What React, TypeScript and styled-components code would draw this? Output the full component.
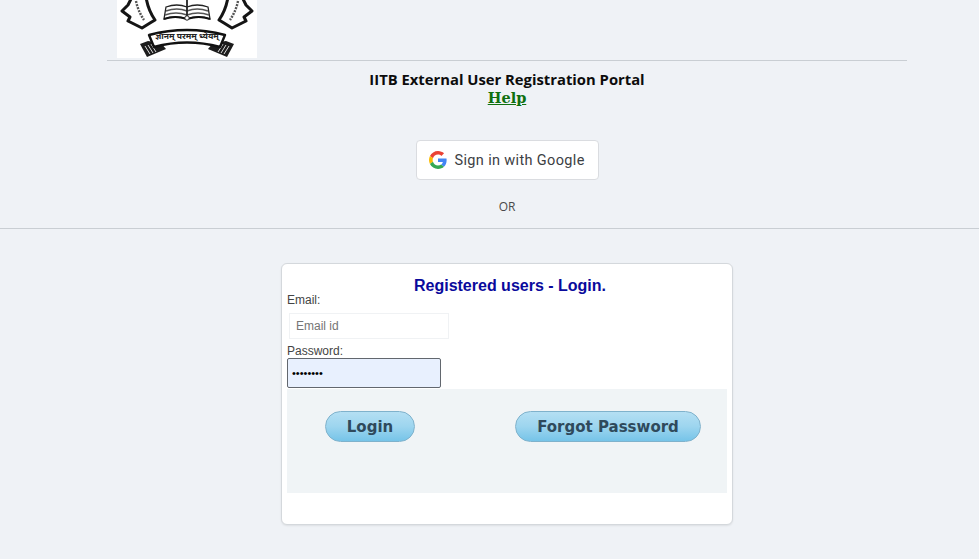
import React from 'react';
import styled, { createGlobalStyle } from 'styled-components';

const GlobalStyle = createGlobalStyle`
  html, body {
    margin: 0;
    padding: 0;
    background: #eff2f6;
    font-family: "Liberation Sans", Arial, sans-serif;
    overflow: hidden;
  }
`;

const Page = styled.div`
  width: 979px;
  height: 559px;
  display: flex;
  flex-direction: column;
`;

const Header = styled.header`
  width: 800px;
  margin-left: 107px;
  display: flex;
  flex-direction: column;
  align-items: center;
  height: 228px;
`;

const LogoRow = styled.div`
  width: 100%;
  height: 61px;
  box-sizing: border-box;
  padding-left: 10px;
  border-bottom: 1px solid #c9ced3;
`;

const LogoBox = styled.div`
  width: 140px;
  height: 58px;
  background: #fff;
`;

const Title = styled.div`
  margin: 9px 0 1px;
  font-family: "Open Sans", sans-serif;
  font-weight: 700;
  font-size: 14.8px;
  line-height: 18px;
  color: #0c0c0c;
`;

const HelpLink = styled.a`
  font-family: "DejaVu Serif", serif;
  font-weight: 700;
  font-size: 14.5px;
  line-height: 18px;
  color: #0f700f;
  text-decoration: underline;
`;

const GoogleButton = styled.button`
  margin-top: 33px;
  width: 183px;
  height: 40px;
  box-sizing: border-box;
  display: flex;
  align-items: center;
  gap: 8px;
  padding: 0 12px;
  background: #fff;
  border: 1px solid #dadce0;
  border-radius: 4px;
  font-family: Roboto, sans-serif;
  font-size: 14.5px;
  letter-spacing: 0.35px;
  color: #3c4043;
`;

const OrText = styled.div`
  margin-top: 19px;
  font-family: "Open Sans", sans-serif;
  font-size: 12px;
  line-height: 16px;
  color: #4a4a4a;
`;

const Divider = styled.hr`
  width: 100%;
  height: 1px;
  margin: 0;
  border: 0;
  background: #c9ced3;
`;

const Main = styled.main`
  display: flex;
  justify-content: center;
  padding-top: 34px;
  margin-left: 35px;
`;

const Card = styled.section`
  width: 452px;
  height: 262px;
  box-sizing: border-box;
  padding: 14px 5px 0;
  background: #fff;
  border: 1px solid #d4d8dc;
  border-radius: 6px;
  box-shadow: 0 1px 2px rgba(0, 0, 0, 0.08);
`;

const CardTitle = styled.h2`
  margin: 0 0 -1px;
  padding-left: 6px;
  text-align: center;
  font-size: 16px;
  line-height: 16px;
  font-weight: 700;
  color: #0a0a9c;
`;

const Label = styled.label`
  display: block;
  font-size: 12px;
  line-height: 14px;
  color: #444;
`;

const EmailInput = styled.input`
  display: block;
  box-sizing: border-box;
  width: 160px;
  height: 26px;
  margin: 6px 0 5px 2px;
  padding: 0 6px;
  background: #fff;
  border: 1px solid #f0f2f4;
  font-family: "Liberation Sans", sans-serif;
  font-size: 12px;
  color: #333;
  outline: none;
  &::placeholder {
    color: #757575;
    opacity: 1;
  }
`;

const PasswordInput = styled.input`
  display: block;
  box-sizing: border-box;
  width: 154px;
  height: 30px;
  margin-top: 0;
  padding: 0 4px;
  background: #e8f0fe;
  border: 1px solid #62676e;
  border-radius: 2px;
  font-family: "Liberation Sans", sans-serif;
  font-size: 11px;
  color: #000;
  outline: none;
`;

const ButtonPanel = styled.div`
  height: 104px;
  margin-top: 1px;
  box-sizing: border-box;
  padding: 22px 26px 0 38px;
  display: flex;
  align-items: flex-start;
  justify-content: space-between;
  background: #f0f4f6;
`;

const PillButton = styled.button<{ $width: number }>`
  width: ${(props) => props.$width}px;
  height: 31px;
  padding: 0;
  border: 1px solid #7fb2cc;
  border-radius: 16px;
  background: linear-gradient(to bottom, #b4dff3 0%, #9dd5ef 50%, #76c4e8 100%);
  font-family: "DejaVu Sans", Verdana, sans-serif;
  font-size: 15px;
  font-weight: 700;
  color: #2f4a5c;
`;

const GoogleMark = () => (
  <svg width="18" height="18" viewBox="0 0 48 48">
    <path fill="#EA4335" d="M24 9.5c3.54 0 6.71 1.22 9.21 3.6l6.85-6.85C35.9 2.38 30.47 0 24 0 14.62 0 6.51 5.38 2.56 13.22l7.98 6.19C12.43 13.72 17.74 9.5 24 9.5z" />
    <path fill="#4285F4" d="M46.98 24.55c0-1.57-.15-3.09-.38-4.55H24v9.02h12.94c-.58 2.96-2.26 5.48-4.78 7.18l7.73 6c4.51-4.18 7.09-10.36 7.09-17.65z" />
    <path fill="#FBBC05" d="M10.53 28.59c-.48-1.45-.76-2.99-.76-4.59s.27-3.14.76-4.59l-7.98-6.19C.92 16.46 0 20.12 0 24c0 3.88.92 7.54 2.56 10.78l7.97-6.19z" />
    <path fill="#34A853" d="M24 48c6.48 0 11.93-2.13 15.89-5.81l-7.73-6c-2.15 1.45-4.92 2.3-8.16 2.3-6.26 0-11.57-4.22-13.47-9.91l-7.98 6.19C6.51 42.62 14.62 48 24 48z" />
  </svg>
);

const GearSide = () => (
  <g>
    <path
      d="M15 -3 L11 5 L5 11 L13 17 L11 21 L25 28 L33 23 L38 20 Q31 10 29 -3 Z"
      fill="#fff"
      stroke="#151515"
      strokeWidth="3"
      strokeLinejoin="round"
    />
    <path d="M19 1 Q21 11 27 20" fill="none" stroke="#555" strokeWidth="2.4" strokeDasharray="2 1.2" />
  </g>
);

const LogoMark = () => (
  <svg width="140" height="58" viewBox="0 0 140 58">
    <GearSide />
    <g transform="translate(140 0) scale(-1 1)">
      <GearSide />
    </g>
    <path d="M47 19 Q58 15 70 19 Q82 15 93 19 L91 7 Q80 3 70 7 Q60 3 49 7 Z" fill="#fff" stroke="#222" strokeWidth="1.3" />
    <path d="M49 11 Q60 7 70 11 Q80 7 91 11 M48 15 Q59 11 70 15 Q81 11 92 15" fill="none" stroke="#555" strokeWidth="1.4" />
    <path d="M70 0 V17" stroke="#222" strokeWidth="1.8" />
    <path d="M47 19 Q58 15 70 19 Q82 15 93 19" fill="none" stroke="#111" strokeWidth="2" />
    <circle cx="70" cy="18" r="2.2" fill="#fff" stroke="#222" />
    <path d="M31 41 L23 44 L30 57 L49 49 L44 43 Z" fill="#1c1c1c" />
    <path d="M109 41 L117 44 L110 57 L91 49 L96 43 Z" fill="#1c1c1c" />
    <path d="M28 46 L33 54 M31 45 L36 53 M34 44 L39 52 M112 46 L107 54 M109 45 L104 53 M106 44 L101 52" stroke="#ddd" strokeWidth="1" />
    <path d="M32 35 Q70 25 108 35 L103 47 Q70 38 37 47 Z" fill="#fff" stroke="#111" strokeWidth="2.4" strokeLinejoin="round" />
    <text x="70" y="39" textAnchor="middle" fontSize="8.5" fontWeight="700" fontFamily="'Noto Sans', 'DejaVu Sans', sans-serif" fill="#222">ज्ञानम् परमम् ध्येयम्</text>
  </svg>
);

const App: React.FC = () => (
  <Page>
    <GlobalStyle />
    <Header>
      <LogoRow>
        <LogoBox>
          <LogoMark />
        </LogoBox>
      </LogoRow>
      <Title>IITB External User Registration Portal</Title>
      <HelpLink href="#">Help</HelpLink>
      <GoogleButton>
        <GoogleMark />
        Sign in with Google
      </GoogleButton>
      <OrText>OR</OrText>
    </Header>
    <Divider />
    <Main>
      <Card>
        <CardTitle>Registered users - Login.</CardTitle>
        <Label>Email:</Label>
        <EmailInput placeholder="Email id" />
        <Label>Password:</Label>
        <PasswordInput type="password" defaultValue="password" />
        <ButtonPanel>
          <PillButton $width={90}>Login</PillButton>
          <PillButton $width={186}>Forgot Password</PillButton>
        </ButtonPanel>
      </Card>
    </Main>
  </Page>
);

export default App;
